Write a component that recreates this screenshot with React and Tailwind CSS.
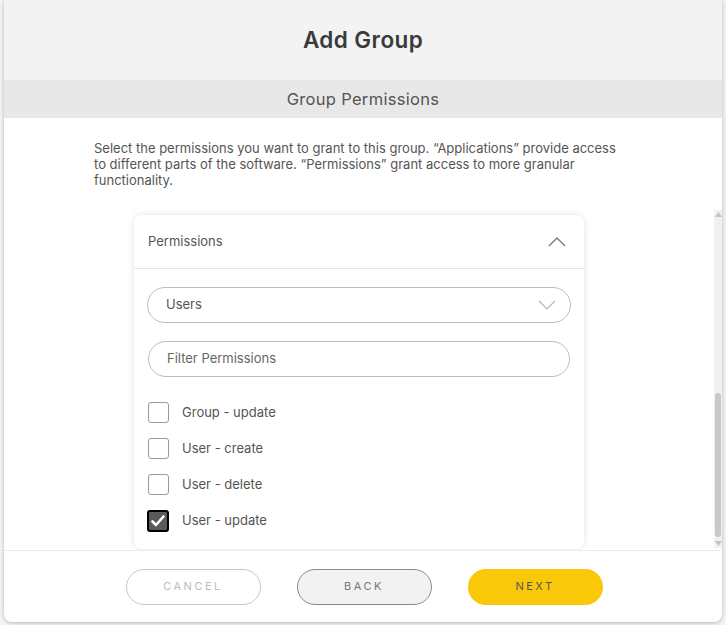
import React from 'react';

const font = { fontFamily: 'Inter, "Noto Sans", sans-serif' };

const permissions = [
    { label: 'Group - update', checked: false },
    { label: 'User - create', checked: false },
    { label: 'User - delete', checked: false },
    { label: 'User - update', checked: true }
];

function HeaderPattern() {
    return (
        <svg className="absolute inset-0 w-full h-full pointer-events-none" viewBox="0 0 718 118" preserveAspectRatio="none">
            <g stroke="#ffffff" strokeOpacity="0.6" strokeWidth="6">
                <line x1="0" y1="8" x2="120" y2="78" />
                <line x1="0" y1="26" x2="110" y2="92" />
                <line x1="10" y1="0" x2="128" y2="62" />
                <line x1="560" y1="30" x2="718" y2="110" />
                <line x1="570" y1="50" x2="700" y2="118" />
                <line x1="590" y1="20" x2="718" y2="86" />
            </g>
            <path d="M130 118 L300 0 L590 0 L500 118 Z" fill="#ffffff" fillOpacity="0.15" />
        </svg>
    );
}

function Checkbox({ checked }) {
    if (checked) {
        return (
            <span className="w-[22px] h-[22px] rounded-[3px] border-2 border-black bg-[#5a5a5a] flex items-center justify-center">
                <svg width="14" height="12" viewBox="0 0 14 12">
                    <path d="M1.5 6.5 L5 10 L12.5 1.5" fill="none" stroke="#fff" strokeWidth="2.6" strokeLinecap="round" strokeLinejoin="round" />
                </svg>
            </span>
        );
    }
    return <span className="w-[21px] h-[21px] rounded-[3px] border border-[#999] bg-white" />;
}

export default function App() {
    return (
        <div className="w-[726px] h-[625px] bg-[#f4f4f4] overflow-hidden" style={font}>
            <div className="ml-[4px] w-[718px] h-[622px] bg-white rounded-b-lg shadow-[0_1px_4px_rgba(0,0,0,0.25)] flex flex-col overflow-hidden">
                {/* Header */}
                <div className="relative">
                    <div className="absolute inset-0 overflow-hidden">
                        <HeaderPattern />
                    </div>
                    <div className="relative h-[80px] bg-[#f2f2f2]/90 flex items-center justify-center">
                        <h2 className="text-[22.5px] font-semibold tracking-[0.4px] text-[#3a3a3a]">Add Group</h2>
                    </div>
                    <div className="relative h-[38px] bg-[#e6e6e6]/90 flex items-center justify-center">
                        <span className="text-[16.5px] tracking-[0.3px] text-[#555]">Group Permissions</span>
                    </div>
                </div>

                {/* Body */}
                <div className="pl-[90px] pr-[97px] pt-[22px] text-[13px] leading-[16px] text-[#555]">
                    Select the permissions you want to grant to this group. “Applications” provide access to different parts of the software. “Permissions” grant access to more granular functionality.
                </div>

                <div className="flex-1 flex mt-[22px] min-h-0">
                    <div className="flex-1 flex justify-center overflow-hidden pt-[5px]">
                        <div className="w-[450px] bg-white rounded-lg shadow-[0_0_6px_rgba(0,0,0,0.12)] self-start">
                            <div className="h-[54px] flex items-center justify-between pl-[14px] pr-[18px] border-b border-[#e6e6e6]">
                                <span className="text-[13px] text-[#555]">Permissions</span>
                                <svg width="18" height="10" viewBox="0 0 18 10">
                                    <path d="M1 9 L9 1 L17 9" fill="none" stroke="#8a7560" strokeWidth="1.3" />
                                </svg>
                            </div>
                            <div className="px-[13px] pt-[18px] pb-[18px]">
                                <div className="h-[36px] rounded-full border border-[#bdbdbd] flex items-center justify-between pl-[18px] pr-[14px]">
                                    <span className="text-[13px] text-[#555]">Users</span>
                                    <svg width="18" height="10" viewBox="0 0 18 10">
                                        <path d="M1 1 L9 9 L17 1" fill="none" stroke="#b5b5b5" strokeWidth="1.2" />
                                    </svg>
                                </div>
                                <div className="mt-[18px] h-[36px] rounded-full border border-[#bdbdbd] flex items-center px-[18px] mx-[1px]">
                                    <span className="text-[13px] text-[#666]">Filter Permissions</span>
                                </div>
                                <div className="mt-[25px] flex flex-col gap-[15px]">
                                    {permissions.map((p) => (
                                        <div key={p.label} className="flex items-center gap-[13px] h-[21px]">
                                            <div className="w-[22px] flex justify-center">
                                                <Checkbox checked={p.checked} />
                                            </div>
                                            <span className="text-[13px] text-[#555]">{p.label}</span>
                                        </div>
                                    ))}
                                </div>
                            </div>
                        </div>
                    </div>
                    {/* Scrollbar */}
                    <div className="w-[8px] flex flex-col items-center bg-[#f1f1f1] pt-[2px] pb-[2px] mb-[2px]">
                        <svg width="7" height="5" viewBox="0 0 7 5"><path d="M0 5 L3.5 0 L7 5 Z" fill="#c3c3c3" /></svg>
                        <div className="flex-1 w-full flex flex-col justify-end pb-[4px]">
                            <div className="h-[144px] w-[6px] mx-auto rounded-full bg-[#c8c8c8]" />
                        </div>
                        <svg width="7" height="5" viewBox="0 0 7 5"><path d="M0 0 L3.5 5 L7 0 Z" fill="#c3c3c3" /></svg>
                    </div>
                </div>

                {/* Footer */}
                <div className="h-[72px] border-t border-[#ececec] flex items-center justify-center gap-[36px] pl-[5px] pr-[3px]">
                    <button className="w-[135px] h-[36px] rounded-full border border-[#c6c6c6] bg-white text-[11px] tracking-[2.5px] text-[#bdbdbd]">CANCEL</button>
                    <button className="w-[135px] h-[36px] rounded-full border border-[#8a8a8a] bg-[#f2f2f2] text-[11px] tracking-[2.5px] text-[#777]">BACK</button>
                    <button className="w-[135px] h-[36px] rounded-full bg-[#f9c909] text-[11px] tracking-[2.5px] text-[#555]">NEXT</button>
                </div>
            </div>
        </div>
    );
}
